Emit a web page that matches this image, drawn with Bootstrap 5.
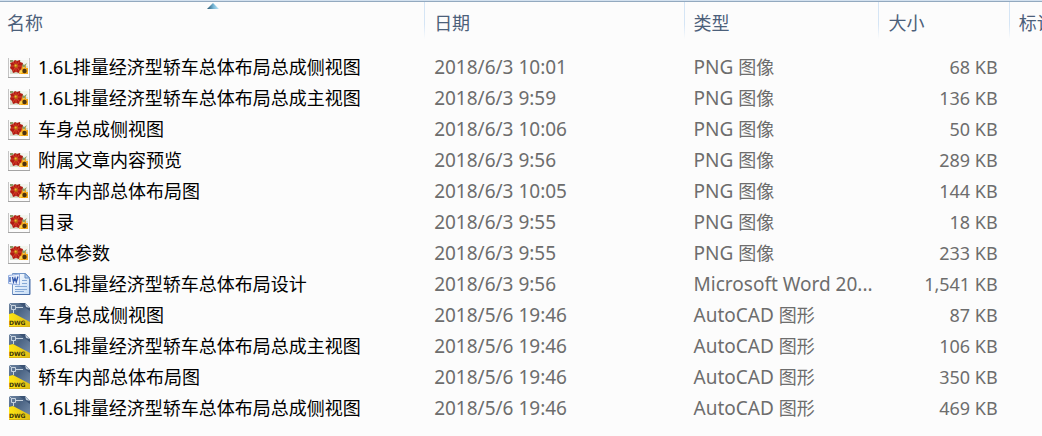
<!DOCTYPE html>
<html lang="zh-CN">
<head>
<meta charset="utf-8">
<meta name="viewport" content="width=device-width, initial-scale=1">
<title>文件列表</title>
<link href="https://cdn.jsdelivr.net/npm/bootstrap@5.3.0/dist/css/bootstrap.min.css" rel="stylesheet">
<style>
  body {
    background: #fcfcfc;
    color: #000;
    font-family: "Noto Sans", "Noto Sans CJK SC", sans-serif;
    font-size: 18px;
    line-height: 30px;
  }
  .explorer { border-top: 1px solid #d3e1ef; overflow: hidden; }
  .explorer-inner { border-top: 1px solid #93a9bf; }
  .files { table-layout: fixed; width: 100%; }
  .files .c-name { width: 40.8%; }
  .files .c-date { width: 24.9%; }
  .files .c-type { width: 18.7%; }
  .files .c-size { width: 12.5%; }
  .files th {
    height: 49px;
    padding: 0;
    vertical-align: top;
    background: linear-gradient(#d5e5f5 60%, #fcfcfc) right top / 1px 37px no-repeat;
  }
  .files th:last-child { background: none; }
  .files .sorter { color: #4c607a; line-height: 30px; padding: 6px 8px 0 9px; }
  .files th:first-child .sorter { padding-left: 7px; }
  .files td { height: 31px; padding: 0 8px 0 9px; color: #6d6d6d; vertical-align: middle; }
  .files td.fname { padding-left: 8px; color: #000; }
  .files td.fsize { padding-right: 12px; }
  .latin { font-size: 19px; }
  .fname svg { width: 23px; height: 26px; }
  .fname .label-text { margin-left: 7px; }
  .sort-arrow { top: 1px; width: 12px; height: 6px; }
</style>
</head>
<body>
<svg class="position-absolute" width="0" height="0" aria-hidden="true">
  <defs>
    <linearGradient id="gArrow" x1="0" x2="1"><stop stop-color="#26536d"/><stop offset=".55" stop-color="#79b9d9"/><stop offset="1" stop-color="#c5e9f8"/></linearGradient>
    <linearGradient id="gBlue" x1="0" x2="1" y1="0" y2="1"><stop stop-color="#7187a3"/><stop offset=".4" stop-color="#4a6383"/><stop offset="1" stop-color="#7c93b0"/></linearGradient>
    <linearGradient id="gYellow" x1="0" x2="1"><stop stop-color="#ffe512"/><stop offset="1" stop-color="#dfbd18"/></linearGradient>
    <linearGradient id="gPage" x1="0" x2="1" y1="0" y2="1"><stop stop-color="#fff"/><stop offset="1" stop-color="#c5dcf5"/></linearGradient>
  </defs>
</svg>

<main class="explorer">
 <div class="explorer-inner">
  <table class="files text-nowrap">
    <colgroup><col class="c-name"><col class="c-date"><col class="c-type"><col class="c-size"><col></colgroup>
    <thead>
      <tr>
        <th scope="col" class="position-relative fw-normal" aria-sort="ascending"><button type="button" class="sorter border-0 bg-transparent w-100 text-start">名称</button><svg class="sort-arrow position-absolute start-50 translate-middle-x" viewBox="0 0 12 6" aria-hidden="true"><path fill="url(#gArrow)" d="M6 0l6 6H0z"/></svg></th>
        <th scope="col" class="fw-normal"><button type="button" class="sorter border-0 bg-transparent w-100 text-start">日期</button></th>
        <th scope="col" class="fw-normal"><button type="button" class="sorter border-0 bg-transparent w-100 text-start">类型</button></th>
        <th scope="col" class="fw-normal"><button type="button" class="sorter border-0 bg-transparent w-100 text-start">大小</button></th>
        <th scope="col" class="fw-normal"><button type="button" class="sorter border-0 bg-transparent text-start">标记</button></th>
      </tr>
    </thead>
    <tbody id="rows"></tbody>
  </table>
 </div>
</main>

<script src="https://cdn.jsdelivr.net/npm/bootstrap@5.3.0/dist/js/bootstrap.bundle.min.js"></script>
<script>
  const icons = {
    png: `
      <path fill="#c4c4c4" d="M0 4h22v20H0z"/>
      <path fill="#a4a4a4" d="M0 23h22v1H0z"/>
      <path fill="#fbfbfb" d="M1 4h20v19H1z"/>
      <path fill="#d7dfcd" d="M2 6h18v14H2z"/>
      <path fill="#f3f5ee" d="M13 6h7v6l-7-1z"/>
      <path fill="#8c9d68" d="M2 6h3v2H2zM14 9l2 2 3-2-2 4h-4z"/>
      <path fill="#b01c14" d="m7 6 2 1 3-1v2l3 1-1 3 1 3-3 1-1 3-3-1-3 1-1-3-2-2 1-3-1-2 3-1z"/>
      <path fill="none" stroke="#d8432a" d="m5 8 6 8m-8-4h11M11 8l-6 9M8 7v11"/>
      <circle cx="8" cy="12" r="2" fill="#b96a13"/><circle cx="7.600" cy="11.500" r="1" fill="#f2bc2e"/>
      <path fill="#f3a718" d="m14 12 2 2 2-3v3h2v6h-9l1-2-1-1 2-1z"/>
      <path fill="#ffd34a" d="m12 17 2-1 1 2-3 2z"/>
      <circle cx="16.500" cy="17" r="2.200" fill="#4a3210"/>`,
    doc: `
      <path fill="url(#gPage)" stroke="#7295c5" d="M4.500 2.500h13l4 4v17h-17z"/>
      <path fill="#b4d0f0" stroke="#6b8fc4" d="M17 2.500v4.500h4.500z"/>
      <path fill="none" stroke="#85a9d6" d="M14 9.500h5M14 12.500h5M7 15.500h12M7 18.500h12M7 20.500h9"/>
      <path fill="none" stroke="#4a6fa8" d="M5 23.500h17V8"/>
      <path fill="#e9f1fc" stroke="#93aee0" d="M.500 4.500 11.500 3v11L.500 12.500z"/>
      <path fill="none" stroke="#3459ad" stroke-width="1.300" d="M2 6v5M4.500 6l1 5L7 7l1.200 4L10 5.500"/>`,
    dwg: `
      <path fill="url(#gBlue)" d="M1 1h16l5 5v19H1z"/>
      <path fill="#3b5374" d="M11 1h6l5 5v3z"/>
      <path fill="#c3cfdc" d="m17 1 5 5-4-1z"/>
      <path fill="none" stroke="#c6d2de" d="M3.500 3.500h4v4h-4zM1 1l3 3M8 5.500h7M5.500 8v3"/>
      <path fill="url(#gYellow)" d="M1 12l4-1 17 9v5H1z"/>
      <path fill="#d6b31b" d="M1 24h21v1H1z"/>
      <text x="1" y="23" font-family="DejaVu Sans, sans-serif" font-size="6" font-weight="700" fill="#3c350c">DWG</text>`
  };
  const types = {
    png: '<span class="latin">PNG </span>图像',
    doc: '<span class="latin">Microsoft Word 20...</span>',
    dwg: '<span class="latin">AutoCAD </span>图形'
  };
  const files = [
    ['png', '1.6L排量经济型轿车总体布局总成侧视图', '2018/6/3 10:01', '68 KB'],
    ['png', '1.6L排量经济型轿车总体布局总成主视图', '2018/6/3 9:59', '136 KB'],
    ['png', '车身总成侧视图', '2018/6/3 10:06', '50 KB'],
    ['png', '附属文章内容预览', '2018/6/3 9:56', '289 KB'],
    ['png', '轿车内部总体布局图', '2018/6/3 10:05', '144 KB'],
    ['png', '目录', '2018/6/3 9:55', '18 KB'],
    ['png', '总体参数', '2018/6/3 9:55', '233 KB'],
    ['doc', '1.6L排量经济型轿车总体布局设计', '2018/6/3 9:56', '1,541 KB'],
    ['dwg', '车身总成侧视图', '2018/5/6 19:46', '87 KB'],
    ['dwg', '1.6L排量经济型轿车总体布局总成主视图', '2018/5/6 19:46', '106 KB'],
    ['dwg', '轿车内部总体布局图', '2018/5/6 19:46', '350 KB'],
    ['dwg', '1.6L排量经济型轿车总体布局总成侧视图', '2018/5/6 19:46', '469 KB']
  ];
  document.getElementById('rows').innerHTML = files.map(([kind, name, date, size]) => `
    <tr>
      <td class="fname"><div class="d-flex align-items-center"><svg class="flex-shrink-0" viewBox="0 0 23 26" aria-hidden="true">${icons[kind]}</svg><span class="label-text text-truncate">${name}</span></div></td>
      <td class="latin">${date}</td>
      <td>${types[kind]}</td>
      <td class="fsize text-end">${size}</td>
      <td></td>
    </tr>`).join('');
</script>
</body>
</html>
